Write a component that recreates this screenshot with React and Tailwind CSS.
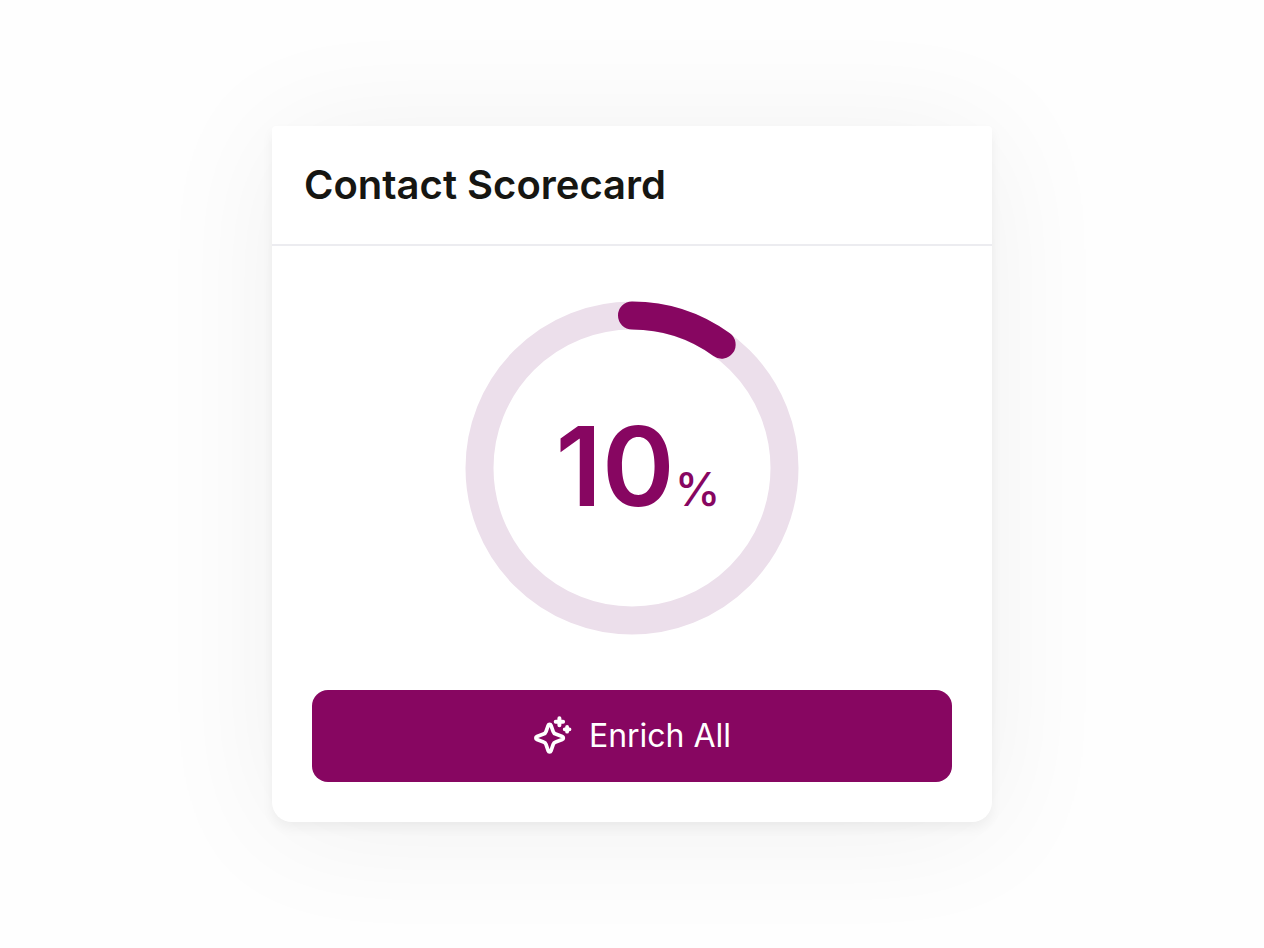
const RADIUS = 152.5;
const CIRCUMFERENCE = 2 * Math.PI * RADIUS;

const SparkleIcon = () => (
  <svg
    className="h-10 w-10 shrink-0"
    viewBox="0 0 40 40"
    fill="none"
    stroke="currentColor"
    strokeLinecap="round"
    strokeLinejoin="round"
    aria-hidden="true"
  >
    <path
      strokeWidth="3.7"
      d="M15.2 9.4C15.7 8 17.5 8 18 9.4L20.2 15.6C20.6 16.8 21.5 17.7 22.7 18.1L29.3 20.5C30.7 21 30.7 23 29.3 23.5L22.7 25.9C21.5 26.3 20.6 27.2 20.2 28.4L18 34.8C17.5 36.2 15.7 36.2 15.2 34.8L13 28.4C12.6 27.2 11.7 26.3 10.5 25.9L3.9 23.5C2.5 23 2.5 21 3.9 20.5L10.5 18.1C11.7 17.7 12.6 16.8 13 15.6Z"
    />
    <path strokeWidth="4" d="M26.4 2.2V9.2M22.7 5.7H30.1" />
    <path strokeWidth="3.8" d="M34.1 10.9V15.7M31.7 13.3H36.5" />
  </svg>
);

const ScoreRing = ({ score }) => (
  <div className="grid place-items-center">
    <svg
      className="col-start-1 row-start-1 h-[334px] w-[334px]"
      viewBox="0 0 334 334"
      fill="none"
      strokeWidth="28"
      aria-hidden="true"
    >
      <circle cx="167" cy="167" r={RADIUS} stroke="#ecdfeb" />
      <circle
        cx="167"
        cy="167"
        r={RADIUS}
        stroke="#870661"
        strokeLinecap="round"
        strokeDasharray={`${(CIRCUMFERENCE * score) / 100} ${CIRCUMFERENCE}`}
        transform="rotate(-90 167 167)"
      />
    </svg>
    <p className="col-start-1 row-start-1 flex items-baseline pb-1 pl-3 leading-none text-[#870661]">
      <span className="text-[110px] font-semibold">{score}</span>
      <span className="text-[46px] font-medium">%</span>
    </p>
  </div>
);

const App = () => {
  return (
    <main className="flex min-h-screen items-center justify-center bg-[#fefefe] p-6 font-['Inter',sans-serif]">
      <section className="w-full max-w-[720px] rounded-t-sm rounded-b-[20px] bg-white shadow-[0_8px_130px_rgba(0,0,0,0.06),0_6px_12px_rgba(0,0,0,0.05)]">
        <header className="border-b-2 border-[#ececf0] px-8 py-[31px]">
          <h1 className="text-[40px] leading-14 font-semibold text-[#161612]">Contact Scorecard</h1>
        </header>

        <div className="flex flex-col gap-[55px] px-10 pt-[55px] pb-10">
          <ScoreRing score={10} />
          <button
            type="button"
            className="flex h-[92px] w-full items-center justify-center gap-4 rounded-2xl bg-[#870661] text-[32px] text-white hover:bg-[#730553]"
          >
            <SparkleIcon />
            Enrich All
          </button>
        </div>
      </section>
    </main>
  );
};

export default App;
